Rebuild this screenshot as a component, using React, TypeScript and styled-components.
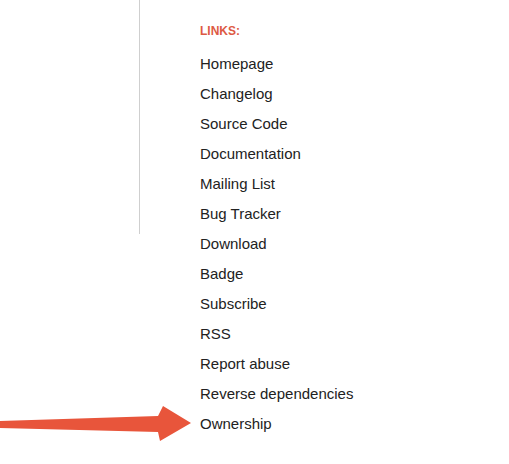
import React from "react";
import styled, { createGlobalStyle } from "styled-components";

const Global = createGlobalStyle`
  html, body { margin: 0; padding: 0; background: #fff; }
  body { font-family: "Liberation Sans", Arial, sans-serif; }
`;

const Page = styled.div`
  position: relative;
  width: 509px;
  height: 464px;
  display: flex;
  overflow: hidden;
`;

const LeftCol = styled.div`
  width: 139px;
  height: 234px;
  border-right: 1px solid #cfcfcf;
  flex-shrink: 0;
`;

const Sidebar = styled.nav`
  padding: 25px 0 0 60px;
  display: flex;
  flex-direction: column;
`;

const Heading = styled.div`
  font-size: 12px;
  line-height: 13px;
  font-weight: bold;
  color: #dd5a44;
  text-transform: uppercase;
  margin-bottom: 11px;
`;

const LinkItem = styled.a`
  font-size: 15px;
  line-height: 30px;
  color: #222;
  text-decoration: none;
`;

const Arrow = styled.svg`
  position: absolute;
  left: 0;
  top: 400px;
`;

const links = [
  "Homepage",
  "Changelog",
  "Source Code",
  "Documentation",
  "Mailing List",
  "Bug Tracker",
  "Download",
  "Badge",
  "Subscribe",
  "RSS",
  "Report abuse",
  "Reverse dependencies",
  "Ownership",
];

export default function App() {
  return (
    <>
      <Global />
      <Page>
        <LeftCol />
        <Sidebar>
          <Heading>Links:</Heading>
          {links.map((l) => (
            <LinkItem key={l} href="#">
              {l}
            </LinkItem>
          ))}
        </Sidebar>
        <Arrow width="200" height="50" viewBox="0 400 200 50">
          <polygon
            points="0,421 158,416 163,406 191,423 160,441 158,432 0,428"
            fill="#e8553b"
          />
        </Arrow>
      </Page>
    </>
  );
}
